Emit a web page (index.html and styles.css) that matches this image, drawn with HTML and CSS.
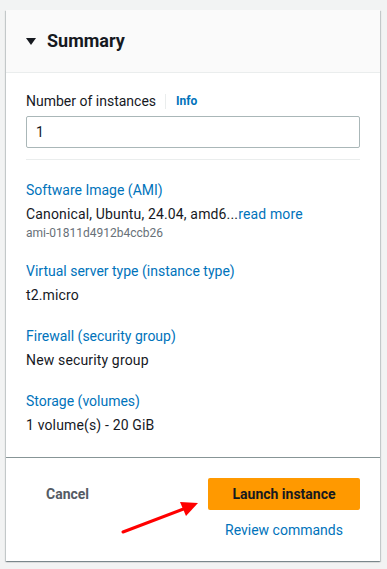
FILE: index.html
```html
<!DOCTYPE html>
<html>
<head>
<meta charset="utf-8">
<title>Summary</title>
<link rel="stylesheet" href="styles.css">
</head>
<body>
<div class="card">
	<div class="card-head">
		<svg class="caret" width="10" height="7" viewBox="0 0 10 7"><polygon points="0,0 10,0 5,7" fill="#16191f"/></svg>
		<h2>Summary</h2>
	</div>

	<div class="card-body">
		<div class="label-row">
			<label for="count">Number of instances</label>
			<span class="sep"></span>
			<a class="info" href="#">Info</a>
		</div>
		<input id="count" type="text" class="num-input" value="1">

		<div class="divider"></div>

		<div class="field">
			<a class="field-link" href="#">Software Image (AMI)</a>
			<div class="field-value">Canonical, Ubuntu, 24.04, amd6...<a href="#">read more</a></div>
			<div class="field-sub">ami-01811d4912b4ccb26</div>
		</div>

		<div class="field">
			<a class="field-link" href="#">Virtual server type (instance type)</a>
			<div class="field-value">t2.micro</div>
		</div>

		<div class="field">
			<a class="field-link" href="#">Firewall (security group)</a>
			<div class="field-value">New security group</div>
		</div>

		<div class="field">
			<a class="field-link" href="#">Storage (volumes)</a>
			<div class="field-value">1 volume(s) - 20 GiB</div>
		</div>
	</div>

	<div class="card-foot">
		<button class="btn-cancel">Cancel</button>
		<div class="launch">
			<button class="btn-launch">Launch instance</button>
			<a class="review" href="#">Review commands</a>
		</div>
		<svg class="arrow" width="90" height="40" viewBox="0 0 90 40">
			<line x1="3" y1="37" x2="66" y2="13" stroke="#ff0000" stroke-width="3" stroke-linecap="round"/>
			<polygon points="78,8 60,7 66,21" fill="#ff0000"/>
		</svg>
	</div>
</div>
</body>
</html>
```

FILE: styles.css
```css
body {margin: 0; background: #f2f3f3; font: 14px/22px Roboto, "Liberation Sans", sans-serif; color: #16191f;}
a {color: #0073bb; text-decoration: none;}

.card {margin: 10px 7px 9px 6px; background: #fff; box-shadow: 0 1px 1px 0 rgba(0,28,36,0.3), 1px 1px 1px 0 rgba(0,28,36,0.15), -1px 1px 1px 0 rgba(0,28,36,0.15);}

.card-head {display: flex; align-items: center; padding: 20px; background: #fafafa; border-bottom: 1px solid #eaeded;}
.card-head h2 {margin: 0 0 0 11px; font-size: 18px; line-height: 22px; font-weight: 700;}
.caret {display: block;}

.card-body {padding: 17px 20px 21px;}
.label-row {display: flex; align-items: center; line-height: 22px; margin-bottom: 4px;}
.label-row label {color: #16191f;}
.sep {width: 1px; height: 15px; background: #eaeded; margin: 0 10px 0 9px;}
.info {font-size: 12px; font-weight: 700;}

.num-input {display: block; box-sizing: border-box; width: 100%; height: 32px; margin: 0; padding: 0 9px; border: 1px solid #aab7b8; border-radius: 2px; font: 14px Roboto, "Liberation Sans", sans-serif; color: #16191f; outline: none;}

.divider {height: 1px; background: #eaeded; margin: 11px 0 14px;}

.field {margin-top: 19px;}
.field:first-of-type {margin-top: 0;}
.field-link {display: block;}
.field-value {margin-top: 2px; letter-spacing: 0.15px;}
.field-sub {font-size: 12px; line-height: 16px; color: #687078;}

.card-foot {position: relative; display: flex; justify-content: space-between; align-items: flex-start; padding: 20px; border-top: 1px solid #879596;}
.btn-cancel {height: 32px; padding: 0 20px; border: 0; background: none; font: 700 14px Roboto, "Liberation Sans", sans-serif; color: #545b64;}
.launch {display: flex; flex-direction: column; align-items: center; width: 152px;}
.btn-launch {width: 152px; height: 32px; border: 0; border-radius: 2px; background: #ff9900; font: 700 14px Roboto, "Liberation Sans", sans-serif; color: #16191f;}
.review {margin-top: 9px;}
.arrow {position: absolute; left: 114px; top: 37px;}
```
